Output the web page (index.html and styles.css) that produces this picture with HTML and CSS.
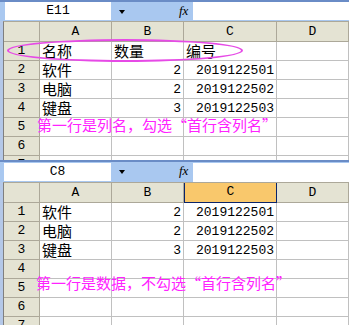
FILE: index.html
```html
<!DOCTYPE html>
<html>
<head>
<meta charset="utf-8">
<link rel="stylesheet" href="styles.css">
</head>
<body>
<div class="sheet sheet-top">
  <div class="bar">
    <div class="namebox">E11</div>
    <div class="dd"><span class="arrow"></span></div>
    <div class="fx">fx</div>
    <div class="formula"></div>
  </div>
  <div class="gridwrap">
    <div class="grid">
      <div class="ch corner"></div><div class="ch">A</div><div class="ch">B</div><div class="ch">C</div><div class="ch">D</div>
      <div class="rh">1</div><div class="c t">名称</div><div class="c t">数量</div><div class="c t">编号</div><div class="c"></div>
      <div class="rh">2</div><div class="c t">软件</div><div class="c n">2</div><div class="c n">2019122501</div><div class="c"></div>
      <div class="rh">3</div><div class="c t">电脑</div><div class="c n">2</div><div class="c n">2019122502</div><div class="c"></div>
      <div class="rh">4</div><div class="c t">键盘</div><div class="c n">3</div><div class="c n">2019122503</div><div class="c"></div>
      <div class="rh">5</div><div class="c"></div><div class="c"></div><div class="c"></div><div class="c"></div>
      <div class="rh">6</div><div class="c"></div><div class="c"></div><div class="c"></div><div class="c"></div>
      <div class="rh">7</div><div class="c"></div><div class="c"></div><div class="c"></div><div class="c"></div>
    </div>
  </div>
  <div class="ellipse"></div>
  <div class="note note1">第一行是列名，勾选“首行含列名”</div>
</div>
<div class="sheet sheet-bottom">
  <div class="bar bar-tall">
    <div class="namebox">C8</div>
    <div class="dd"><span class="arrow"></span></div>
    <div class="fx">fx</div>
    <div class="formula"></div>
  </div>
  <div class="gridwrap">
    <div class="grid">
      <div class="ch corner"></div><div class="ch">A</div><div class="ch">B</div><div class="ch sel">C</div><div class="ch">D</div>
      <div class="rh">1</div><div class="c t">软件</div><div class="c n">2</div><div class="c n">2019122501</div><div class="c"></div>
      <div class="rh">2</div><div class="c t">电脑</div><div class="c n">2</div><div class="c n">2019122502</div><div class="c"></div>
      <div class="rh">3</div><div class="c t">键盘</div><div class="c n">3</div><div class="c n">2019122503</div><div class="c"></div>
      <div class="rh">4</div><div class="c"></div><div class="c"></div><div class="c"></div><div class="c"></div>
      <div class="rh">5</div><div class="c"></div><div class="c"></div><div class="c"></div><div class="c"></div>
      <div class="rh">6</div><div class="c"></div><div class="c"></div><div class="c"></div><div class="c"></div>
      <div class="rh">7</div><div class="c"></div><div class="c"></div><div class="c"></div><div class="c"></div>
    </div>
  </div>
  <div class="note note2">第一行是数据，不勾选“首行含列名”</div>
</div>
</body>
</html>
```
FILE: styles.css
```css
html, body {
  margin: 0;
  padding: 0;
  background: #ffffff;
}
body {
  width: 349px;
  height: 325px;
  overflow: hidden;
  font-family: "Liberation Mono", monospace;
}
.sheet {
  position: relative;
  overflow: hidden;
  border-top: 2px solid #6a8cc6;
  background: #b4c8e8;
}
.sheet-top { height: 158px; }
.sheet-bottom { height: 163px; }

.bar {
  display: flex;
  height: 19px;
  background: #a9c8f0;
}
.bar-tall { height: 20px; }
.namebox {
  margin-left: 5px;
  width: 106px;
  height: 18px;
  background: #ffffff;
  font: 13px/18px "Liberation Mono", monospace;
  color: #000;
  text-align: center;
}
.bar-tall .namebox { margin-left: 4px; width: 107px; margin-top: 1px; }
.dd {
  width: 64px;
  position: relative;
}
.arrow {
  position: absolute;
  left: 8px;
  top: 8px;
  width: 0;
  height: 0;
  border-left: 3px solid transparent;
  border-right: 3px solid transparent;
  border-top: 4px solid #000;
}
.fx {
  width: 17px;
  font: italic 13px/18px "Liberation Serif", serif;
  color: #000;
  padding-left: 4px;
  box-sizing: border-box;
}
.formula {
  flex: 1;
  height: 18px;
  margin-left: 1px;
  background: #ffffff;
}
.bar-tall .formula { margin-top: 1px; height: 19px; }

.gridwrap {
  padding-left: 3px;
  background: #b4c8e8;
}
.grid {
  display: grid;
  grid-template-columns: 36px 72px 72px 93px 72px;
  grid-template-rows: 20px;
  grid-auto-rows: 19px;
  border-left: 1px solid #7f7f7f;
  border-top: 1px solid #aca899;
  background: #ffffff;
}
.ch, .rh, .c {
  box-sizing: border-box;
  border-right: 1px solid #c0c0c0;
  border-bottom: 1px solid #c0c0c0;
  overflow: visible;
  white-space: nowrap;
}
.ch {
  background: #e4e3d3;
  border-right-color: #aca899;
  border-bottom-color: #aca899;
  font: 13px/19px "Liberation Mono", monospace;
  text-align: center;
  color: #000;
}
.ch.sel {
  background: #f9c86c;
  border: 1px solid #0a246a;
  border-top: 0;
  line-height: 18px;
}
.rh {
  background: #e4e3d3;
  border-right-color: #aca899;
  border-bottom-color: #aca899;
  font: 13px/18px "Liberation Mono", monospace;
  text-align: center;
  color: #000;
}
.c.t {
  font: 15px/18px "Noto Sans CJK SC", sans-serif;
  padding-left: 2px;
  color: #000;
}
.c.n {
  font: 13px/19px "Liberation Mono", monospace;
  text-align: right;
  padding-right: 2px;
  color: #000;
}
.ellipse {
  position: absolute;
  left: 7px;
  top: 37px;
  width: 236px;
  height: 23px;
  box-sizing: border-box;
  border: 2px solid #e64ae6;
  border-radius: 50%;
}
.note {
  position: absolute;
  font: 15px/15px "Noto Sans CJK SC", sans-serif;
  color: #ff22ff;
  white-space: nowrap;
}
.note1 { left: 37px; top: 115px; }
.note2 { left: 36px; top: 113px; }
```
